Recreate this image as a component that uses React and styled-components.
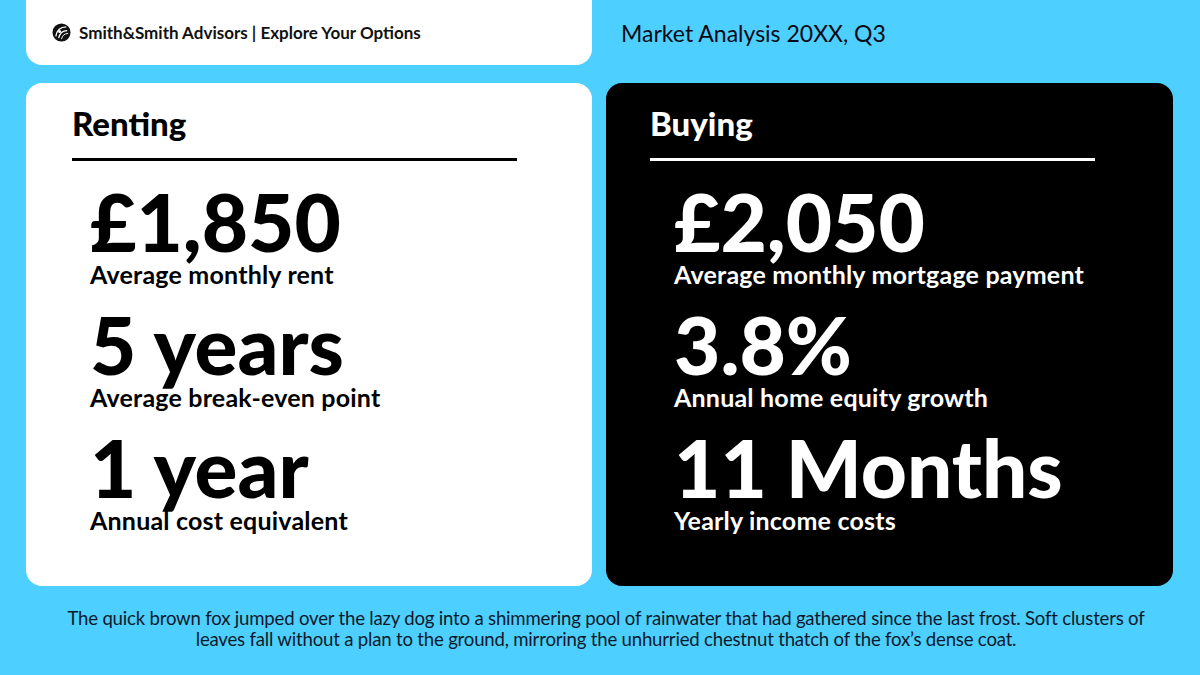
import React from "react";
import styled, { createGlobalStyle } from "styled-components";

const Global = createGlobalStyle`
  html, body { margin: 0; padding: 0; }
  body { background: #4dcfff; font-family: Lato, "Noto Sans", sans-serif; }
`;

const Page = styled.div`
  width: 1200px;
  height: 675px;
  box-sizing: border-box;
  padding: 0 26px 0 26px;
  display: grid;
  grid-template-columns: 566px 567px;
  grid-template-rows: 65px 503px auto;
  column-gap: 14px;
  row-gap: 18px;
  background: #4dcfff;
  overflow: hidden;
`;

const HeaderCard = styled.div`
  background: #fff;
  border-radius: 0 0 16px 16px;
  display: flex;
  align-items: center;
  gap: 8px;
  padding: 0 0 0 26px;
  font-size: 17px;
  font-weight: 700;
  color: #111;
  letter-spacing: 0;
`;

const HeaderRight = styled.div`
  display: flex;
  align-items: center;
  padding: 0 0 0 15px;
  height: 66px;
  font-size: 23px;
  font-weight: 400;
  color: #0a0a14;
`;

const Card = styled.div`
  background: ${(p) => (p.$dark ? "#000" : "#fff")};
  color: ${(p) => (p.$dark ? "#fff" : "#000")};
  border-radius: 16px;
  padding: 20px 0 0 ${(p) => (p.$dark ? 44 : 46)}px;
  display: flex;
  flex-direction: column;
`;

const Title = styled.h2`
  margin: 0;
  font-size: 33px;
  font-weight: 900;
  line-height: 40px;
`;

const Rule = styled.div`
  width: 445px;
  height: 3px;
  margin-top: 15px;
  background: ${(p) => (p.$dark ? "#fff" : "#000")};
`;

const Stats = styled.div`
  display: flex;
  flex-direction: column;
  padding: 21px 0 0 ${(p) => (p.$dark ? 24 : 18)}px;
`;

const Stat = styled.div`
  display: flex;
  flex-direction: column;
  height: 123px;
`;

const Value = styled.div`
  font-size: 80px;
  font-weight: 900;
  line-height: 78px;
`;

const Label = styled.div`
  font-size: 25px;
  font-weight: 700;
  line-height: 28px;
  letter-spacing: 0.2px;
`;

const Footer = styled.p`
  grid-column: 1 / span 2;
  margin: 4px 0 0;
  padding-left: 13px;
  text-align: center;
  font-size: 18.6px;
  line-height: 21px;
  color: #0c1a2a;
  letter-spacing: -0.2px;
`;

const Logo = () => (
  <svg width="19" height="19" viewBox="0 0 20 20">
    <circle cx="10" cy="10" r="9.5" fill="#111" />
    <path d="M4 14 C5 8 9 4 15 4" stroke="#fff" strokeWidth="1.4" fill="none" />
    <path d="M7 16 C8 11 11 8 16 8" stroke="#fff" strokeWidth="1.2" fill="none" />
    <path d="M10 17 C11 13 13 11 17 11" stroke="#fff" strokeWidth="1" fill="none" />
    <circle cx="8" cy="9" r="1.6" fill="#fff" />
  </svg>
);

const Panel = ({ title, dark, stats }) => (
  <Card $dark={dark}>
    <Title>{title}</Title>
    <Rule $dark={dark} />
    <Stats $dark={dark}>
      {stats.map(([v, l]) => (
        <Stat key={l}>
          <Value>{v}</Value>
          <Label>{l}</Label>
        </Stat>
      ))}
    </Stats>
  </Card>
);

export default function App() {
  return (
    <>
      <Global />
      <Page>
        <HeaderCard>
          <Logo />
          <span>Smith&amp;Smith Advisors | Explore Your Options</span>
        </HeaderCard>
        <HeaderRight>Market Analysis 20XX, Q3</HeaderRight>
        <Panel
          title="Renting"
          stats={[
            ["£1,850", "Average monthly rent"],
            ["5 years", "Average break-even point"],
            ["1 year", "Annual cost equivalent"],
          ]}
        />
        <Panel
          title="Buying"
          dark
          stats={[
            ["£2,050", "Average monthly mortgage payment"],
            ["3.8%", "Annual home equity growth"],
            ["11 Months", "Yearly income costs"],
          ]}
        />
        <Footer>
          The quick brown fox jumped over the lazy dog into a shimmering pool of rainwater that had gathered since the last frost. Soft clusters of
          <br />
          leaves fall without a plan to the ground, mirroring the unhurried chestnut thatch of the fox’s dense coat.
        </Footer>
      </Page>
    </>
  );
}
